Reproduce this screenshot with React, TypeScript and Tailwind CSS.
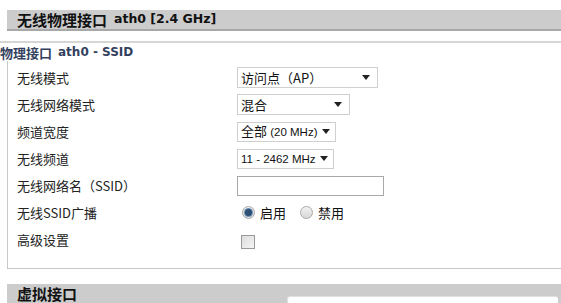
import React from "react";

const cjk = { fontFamily: '"Noto Sans CJK SC", "Noto Sans", sans-serif' };
const lat = { fontFamily: '"DejaVu Sans", "Noto Sans CJK SC", sans-serif' };
const lib = { fontFamily: '"Liberation Sans", "Noto Sans CJK SC", sans-serif' };

function Arrow() {
  return (
    <svg width="8" height="5" viewBox="0 0 8 5" className="shrink-0">
      <polygon points="0,0 8,0 4,5" fill="#222" />
    </svg>
  );
}

function Select({ w, h = 21, children, pr = 7, small = false }: { w: number; h?: number; children: React.ReactNode; pr?: number; small?: boolean }) {
  return (
    <div
      className="flex items-center justify-between border border-[#cfcfcf] bg-white pl-[3px] text-[13px] text-[#111]"
      style={{ width: w, height: h, paddingRight: pr, ...(small ? lib : cjk) }}
    >
      <span className="whitespace-nowrap leading-none">{children}</span>
      <Arrow />
    </div>
  );
}

function Row({ label, children }: { label: React.ReactNode; children?: React.ReactNode }) {
  return (
    <div className="flex h-[27px] items-center">
      <div className="w-[229px] shrink-0 pl-[9px] text-[13px] text-[#222]" style={cjk}>
        {label}
      </div>
      <div className="flex items-center">{children}</div>
    </div>
  );
}

function Radio({ checked }: { checked?: boolean }) {
  return (
    <span className="flex h-[13px] w-[13px] items-center justify-center rounded-full border border-[#a9a9a9] bg-gradient-to-b from-[#f2f2f2] to-[#d8d8d8]">
      {checked && <span className="h-[7px] w-[7px] rounded-full bg-[#2c4f73] ring-1 ring-[#6d93b6]" />}
    </span>
  );
}

export default function App() {
  return (
    <div className="relative h-[303px] w-[561px] overflow-hidden bg-white" style={cjk}>
      <div className="pt-[10px] pl-[7px]">
        <div className="flex h-[21px] items-center border-b-2 border-[#a8a8a8] bg-[#cccccc] pl-[10px] text-[#111]">
          <span className="text-[15px] font-bold leading-none" style={cjk}>无线物理接口</span>
          <span className="ml-[7px] text-[12.5px] font-bold leading-none" style={lat}>ath0 [2.4 GHz]</span>
        </div>
      </div>
      <div className="mt-[10px] border-t-2 border-[#d6d6d6]">
        <div className="flex h-[18px] items-center text-[#33415e]">
          <span className="text-[13px] font-bold leading-none" style={cjk}>物理接口</span>
          <span className="ml-[6px] text-[12px] font-bold leading-none" style={lat}>ath0 - SSID</span>
        </div>
        <div className="ml-[7px] border-b border-l border-[#c8c8c8] pt-[3px] pb-[15px]">
          <Row label="无线模式">
            <Select w={141}>访问点（AP）</Select>
          </Row>
          <Row label="无线网络模式">
            <Select w={113}>混合</Select>
          </Row>
          <Row label="频道宽度">
            <Select w={99} h={20} pr={5}>
              全部<span style={lib} className="text-[11.5px]"> (20 MHz)</span>
            </Select>
          </Row>
          <Row label="无线频道">
            <Select w={97} h={20} pr={5} small>
              <span className="text-[11.5px]">11 - 2462 MHz</span>
            </Select>
          </Row>
          <Row label="无线网络名（SSID）">
            <div className="h-[20px] w-[147px] border border-[#a9a9a9] bg-white" />
          </Row>
          <Row label="无线SSID广播">
            <div className="flex items-center pl-[5px] text-[13px] text-[#111]" style={cjk}>
              <Radio checked />
              <span className="ml-[5px]">启用</span>
              <span className="ml-[14px]">
                <Radio />
              </span>
              <span className="ml-[5px]">禁用</span>
            </div>
          </Row>
          <Row label="高级设置">
            <div className="ml-[4px] mt-[5px] h-[14px] w-[14px] border border-[#9a9a9a] bg-gradient-to-br from-[#dcdcdc] to-[#f6f6f6]" />
          </Row>
        </div>
      </div>
      <div className="mt-[15px] pl-[7px]">
        <div className="flex h-[21px] items-center border-b-2 border-[#a8a8a8] bg-[#cccccc] pl-[10px] text-[#111]">
          <span className="text-[15px] font-bold leading-none" style={cjk}>虚拟接口</span>
        </div>
      </div>
      <div className="absolute left-[287px] right-[3px] top-[296px] h-[20px] rounded-t-[3px] border-t border-l border-[#e0e0e0] bg-white" />
    </div>
  );
}
